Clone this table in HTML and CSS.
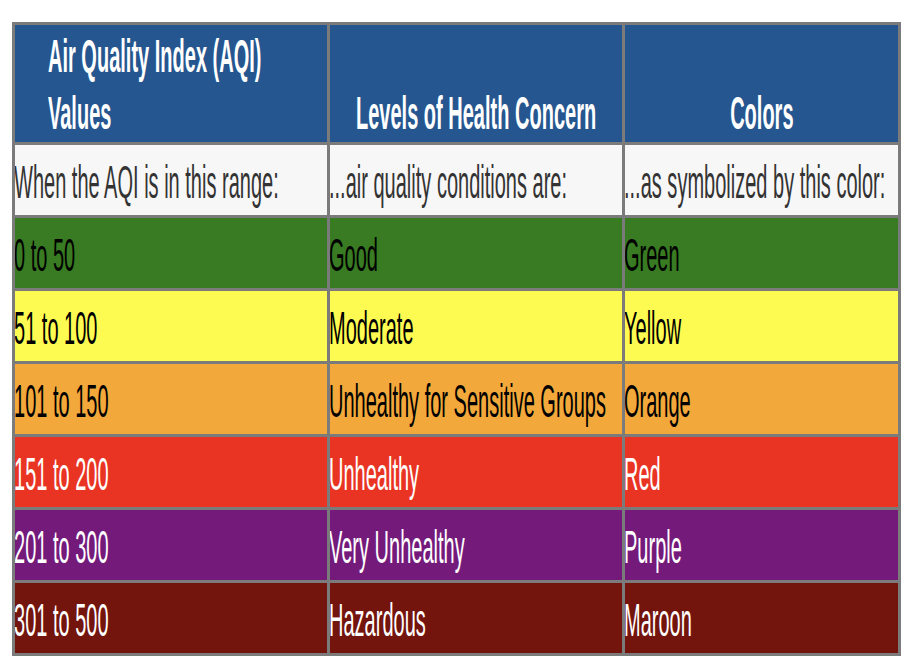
FILE: index.html
```html
<!DOCTYPE html>
<html lang="en">
<head>
<meta charset="utf-8">
<title>Air Quality Index</title>
<link rel="stylesheet" href="styles.css">
</head>
<body>
<table class="aqi">
  <colgroup><col class="c1"><col class="c2"><col class="c3"></colgroup>
  <thead>
    <tr class="head">
      <th><div class="cell cell-head cell-first"><span class="txt">Air Quality Index (AQI)<br>Values</span></div></th>
      <th><div class="cell cell-head cell-center"><span class="txt">Levels of Health Concern</span></div></th>
      <th><div class="cell cell-head cell-center"><span class="txt">Colors</span></div></th>
    </tr>
  </thead>
  <tbody>
    <tr class="sub">
      <td><div class="cell"><span class="txt">When the AQI is in this range:</span></div></td>
      <td><div class="cell"><span class="txt">...air quality conditions are:</span></div></td>
      <td><div class="cell"><span class="txt">...as symbolized by this color:</span></div></td>
    </tr>
    <tr class="good">
      <td><div class="cell"><span class="txt">0 to 50</span></div></td>
      <td><div class="cell"><span class="txt">Good</span></div></td>
      <td><div class="cell"><span class="txt">Green</span></div></td>
    </tr>
    <tr class="moderate">
      <td><div class="cell"><span class="txt">51 to 100</span></div></td>
      <td><div class="cell"><span class="txt">Moderate</span></div></td>
      <td><div class="cell"><span class="txt">Yellow</span></div></td>
    </tr>
    <tr class="sensitive">
      <td><div class="cell"><span class="txt">101 to 150</span></div></td>
      <td><div class="cell"><span class="txt">Unhealthy for Sensitive Groups</span></div></td>
      <td><div class="cell"><span class="txt">Orange</span></div></td>
    </tr>
    <tr class="unhealthy">
      <td><div class="cell"><span class="txt">151 to 200</span></div></td>
      <td><div class="cell"><span class="txt">Unhealthy</span></div></td>
      <td><div class="cell"><span class="txt">Red</span></div></td>
    </tr>
    <tr class="very">
      <td><div class="cell"><span class="txt">201 to 300</span></div></td>
      <td><div class="cell"><span class="txt">Very Unhealthy</span></div></td>
      <td><div class="cell"><span class="txt">Purple</span></div></td>
    </tr>
    <tr class="hazardous">
      <td><div class="cell"><span class="txt">301 to 500</span></div></td>
      <td><div class="cell"><span class="txt">Hazardous</span></div></td>
      <td><div class="cell"><span class="txt">Maroon</span></div></td>
    </tr>
  </tbody>
</table>
</body>
</html>
```
FILE: styles.css
```css
body {
  margin: 0;
  background: #ffffff;
  font-family: "Liberation Sans", Arial, sans-serif;
  overflow: hidden;
}

.aqi {
  margin: 22px 0 0 12px;
  width: 889px;
  table-layout: fixed;
  border: 3px solid #7b7b7b;
  border-spacing: 0;
}

col.c1 { width: 315px; }
col.c2 { width: 295px; }
col.c3 { width: 273px; }

.aqi th,
.aqi td {
  padding: 0;
  border-right: 3px solid #7b7b7b;
  border-bottom: 3px solid #7b7b7b;
  overflow: hidden;
  font-weight: normal;
  text-align: left;
}

.aqi th:last-child,
.aqi td:last-child {
  border-right: 0;
}

.aqi tbody tr:last-child td {
  border-bottom: 0;
}

.cell {
  display: flex;
  align-items: center;
  height: 70px;
  box-sizing: border-box;
  padding-top: 4px;
}

.txt {
  display: block;
  flex-shrink: 0;
  font-size: 46px;
  line-height: 53px;
  white-space: nowrap;
  transform: scaleX(0.435);
  transform-origin: left center;
  margin-left: -1px;
}

.head th {
  background: #25568f;
  color: #ffffff;
}

.cell-head {
  height: 117px;
  align-items: flex-end;
  padding-top: 0;
}

.cell-head .txt {
  font-weight: bold;
  line-height: 57px;
}

.cell-first {
  padding-left: 34px;
}

.cell-center {
  justify-content: center;
}

.cell-center .txt {
  transform-origin: center center;
  margin-left: 0;
}

.sub td { background: #f7f7f7; color: #333333; }
.good td { background: #387b22; color: #000000; }
.moderate td { background: #fdfb51; color: #000000; }
.sensitive td { background: #f2a83b; color: #000000; }
.unhealthy td { background: #e93424; color: #ffffff; }
.very td { background: #741a7b; color: #ffffff; }
.hazardous td { background: #73140d; color: #ffffff; }
```
